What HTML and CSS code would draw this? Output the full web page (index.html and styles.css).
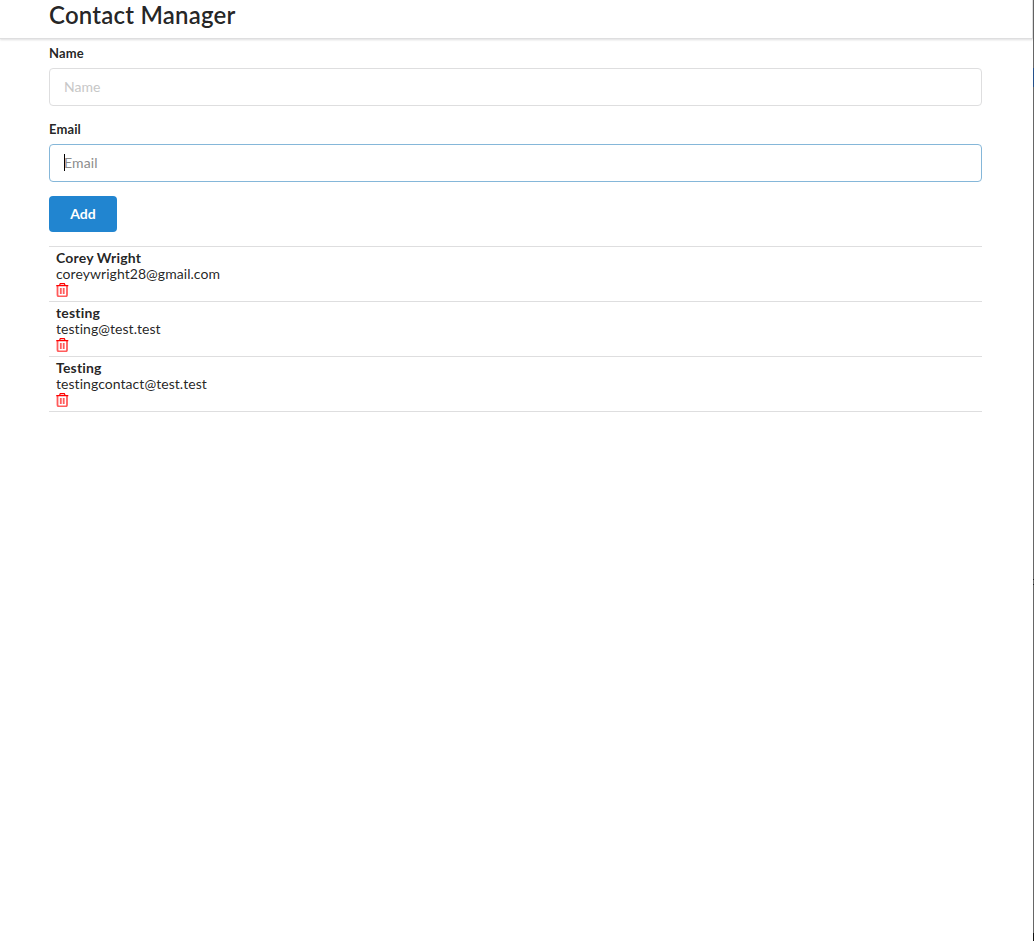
FILE: index.html
```html
<!DOCTYPE html>
<html lang="en">
<head>
<meta charset="utf-8">
<title>Contact Manager</title>
<link rel="stylesheet" href="styles.css">
</head>
<body>
<header class="menu"><h2 class="title">Contact Manager</h2></header>
<main class="container">
  <form class="form">
    <div class="field"><label class="label" for="name">Name</label><input class="input" id="name" type="text" placeholder="Name"></div>
    <div class="field last"><label class="label" for="email">Email</label><div class="wrap"><input class="input active" id="email" type="text" placeholder="Email"><span class="caret"></span></div></div>
    <button class="button" type="button">Add</button>
  </form>
  <ul class="list">
    <li class="item"><div class="name">Corey Wright</div><div class="email">coreywright28@gmail.com</div><svg class="trash" viewBox="0 0 13 14"><path class="can" d="M1.5 2.5V12Q1.5 13.3 2.9 13.3H9.6Q11 13.3 11 12V2.5M4.8 5V11M7.7 5V11"/><path class="lid" d="M.3 2.6H12.3M3.5 2.5L4.3 .6H8.3L9.1 2.5"/></svg></li>
    <li class="item"><div class="name">testing</div><div class="email">testing@test.test</div><svg class="trash" viewBox="0 0 13 14"><path class="can" d="M1.5 2.5V12Q1.5 13.3 2.9 13.3H9.6Q11 13.3 11 12V2.5M4.8 5V11M7.7 5V11"/><path class="lid" d="M.3 2.6H12.3M3.5 2.5L4.3 .6H8.3L9.1 2.5"/></svg></li>
    <li class="item"><div class="name">Testing</div><div class="email">testingcontact@test.test</div><svg class="trash" viewBox="0 0 13 14"><path class="can" d="M1.5 2.5V12Q1.5 13.3 2.9 13.3H9.6Q11 13.3 11 12V2.5M4.8 5V11M7.7 5V11"/><path class="lid" d="M.3 2.6H12.3M3.5 2.5L4.3 .6H8.3L9.1 2.5"/></svg></li>
  </ul>
</main>
</body>
</html>
```
FILE: styles.css
```css
* { box-sizing: border-box; }
body { margin: 0; min-height: 941px; padding-right: 1px; background: linear-gradient(#666 0 68px, #24508a 68px 87px, #666 87px 579px, #222 579px 580px, #666 580px 584px, #222 584px 585px, #666 585px 933px, #111 933px) right top / 1px 941px no-repeat #fff; font: 14px/16px Lato, sans-serif; color: rgba(0,0,0,.87); }
.menu { height: 39px; padding: 0 49px; border: 1px solid #dededf; border-width: 0 1px 1px 0; box-shadow: 0 1px 2px rgba(34,36,38,.15); }
.title { margin: 0; font-size: 24px; line-height: 29px; font-weight: 600; letter-spacing: .2px; }
.container { margin-left: 49px; width: 933px; padding-top: 6px; }
.field { margin-bottom: 15px; }
.last { margin-bottom: 14px; }
.label { display: block; height: 23px; font-size: 13px; line-height: 17px; font-weight: 700; letter-spacing: .12px; }
.wrap { position: relative; }
.input { display: block; width: 100%; height: 38px; padding: 0 14px 2px; border: 1px solid #dededf; border-radius: 4px; font: 14px/17px Lato, sans-serif; outline: 0; }
.input::placeholder { color: #c7c7c7; opacity: 1; }
.active { border-color: #85b7d9; }
.active::placeholder { color: #8c8c8c; letter-spacing: .15px; }
.caret { position: absolute; left: 15px; top: 10px; width: 1px; height: 17px; background: #000; }
.button { display: block; width: 68px; height: 36px; padding: 0; border: 0; border-radius: 4px; background: #2185d0; color: #fff; font: 700 14px/14px Lato, sans-serif; }
.list { margin: 14px 0 0; padding: 0; list-style: none; border-top: 1px solid #dededf; }
.item { height: 55px; padding: 3px 7px 0; border-bottom: 1px solid #dededf; }
.name { font-weight: 700; letter-spacing: .18px; }
.email { letter-spacing: .05px; }
.trash { display: block; width: 13px; height: 14px; margin-top: 1px; fill: none; stroke: #f00; stroke-width: 1.2; }
.can { stroke: #ff5c5c; stroke-width: 1.8; }
```
